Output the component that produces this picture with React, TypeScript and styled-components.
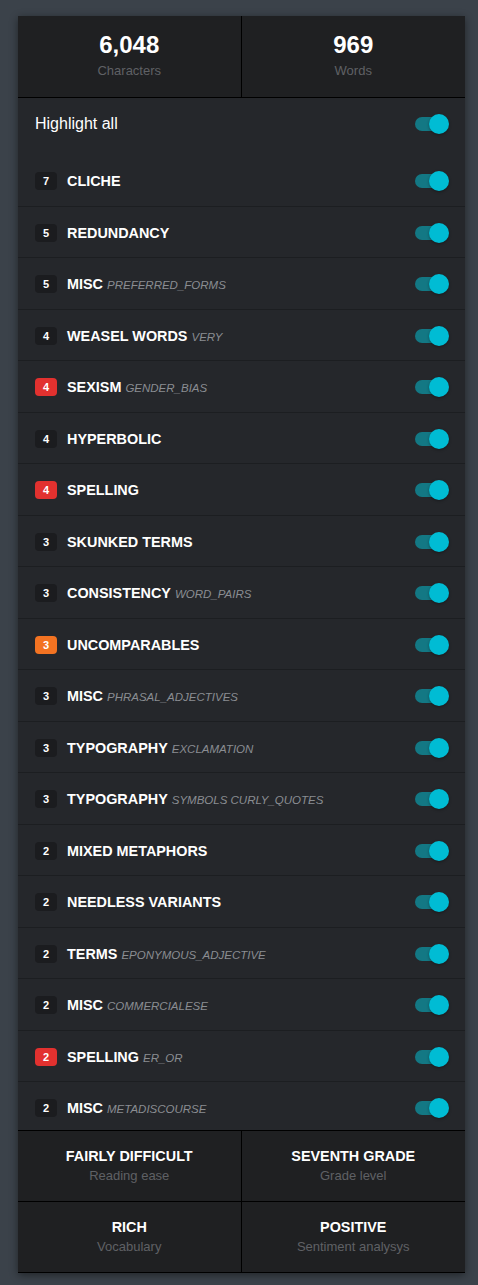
import React from "react";
import styled, { createGlobalStyle } from "styled-components";

const GlobalStyle = createGlobalStyle`
  html, body {
    margin: 0;
    padding: 0;
    background: #3b424a;
    font-family: "Liberation Sans", Arial, sans-serif;
  }
`;

type Tone = "dark" | "red" | "orange";

const toneColors: Record<Tone, string> = {
  dark: "#1b1c1f",
  red: "#e2312f",
  orange: "#f37322",
};

const Page = styled.div`
  padding: 16px 13px 12px 18px;
`;

const Panel = styled.div`
  width: 447px;
  background: #25272b;
  box-shadow: 0 2px 8px rgba(0, 0, 0, 0.45);
`;

const StatGrid = styled.div<{ $top?: boolean }>`
  display: grid;
  grid-template-columns: 1fr 1fr;
  background: #1f2022;
  border-top: ${(p) => (p.$top ? "1px solid #000" : "none")};
`;

const StatCell = styled.div<{ $divider?: boolean; $compact?: boolean }>`
  display: flex;
  flex-direction: column;
  align-items: center;
  box-sizing: border-box;
  height: ${(p) => (p.$compact ? "71px" : "82px")};
  padding-top: 15px;
  border-bottom: 1px solid #000;
  border-right: ${(p) => (p.$divider ? "1px solid #000" : "none")};
`;

const BigNumber = styled.div`
  font-size: 24px;
  font-weight: 700;
  line-height: 28px;
  color: #fff;
`;

const StatTitle = styled.div`
  font-size: 14.4px;
  font-weight: 700;
  line-height: 20px;
  color: #fff;
`;

const StatCaption = styled.div<{ $gap: number }>`
  margin-top: ${(p) => p.$gap}px;
  font-size: 13px;
  line-height: 16px;
  color: #5f6165;
`;

const ListArea = styled.div`
  height: 1032px;
  overflow: hidden;
`;

const HighlightRow = styled.div`
  display: flex;
  justify-content: space-between;
  align-items: center;
  box-sizing: border-box;
  height: 57px;
  padding: 17px 16px 22px 17px;
  font-size: 16px;
  color: #fff;
`;

const RuleRow = styled.div`
  display: flex;
  align-items: center;
  box-sizing: border-box;
  height: 51.5px;
  padding: 2px 16px 0 17px;
  border-bottom: 1px solid #1c1e21;
`;

const Badge = styled.span<{ $tone: Tone }>`
  flex: none;
  display: inline-flex;
  align-items: center;
  justify-content: center;
  width: 22px;
  height: 18px;
  border-radius: 4px;
  background: ${(p) => toneColors[p.$tone]};
  color: #fff;
  font-size: 11px;
  font-weight: 700;
`;

const Label = styled.span`
  flex: 1;
  margin-left: 10px;
  font-size: 14.4px;
  font-weight: 700;
  color: #fff;
  white-space: nowrap;
`;

const Sub = styled.span`
  margin-left: 4px;
  font-size: 11.5px;
  font-weight: 400;
  font-style: italic;
  color: #8a8d92;
`;

const SwitchBox = styled.span`
  position: relative;
  flex: none;
  width: 34px;
  height: 20px;
`;

const Track = styled.span`
  position: absolute;
  left: 0;
  top: 3px;
  width: 32px;
  height: 14px;
  border-radius: 7px;
  background: #137884;
`;

const Thumb = styled.span`
  position: absolute;
  right: 0;
  top: 0;
  width: 20px;
  height: 20px;
  border-radius: 50%;
  background: #00bcd4;
  box-shadow: 0 1px 3px rgba(0, 0, 0, 0.35);
`;

const Switch = () => (
  <SwitchBox>
    <Track />
    <Thumb />
  </SwitchBox>
);

const rules: { n: number; name: string; sub?: string; tone?: Tone }[] = [
  { n: 7, name: "CLICHE" },
  { n: 5, name: "REDUNDANCY" },
  { n: 5, name: "MISC", sub: "PREFERRED_FORMS" },
  { n: 4, name: "WEASEL WORDS", sub: "VERY" },
  { n: 4, name: "SEXISM", sub: "GENDER_BIAS", tone: "red" },
  { n: 4, name: "HYPERBOLIC" },
  { n: 4, name: "SPELLING", tone: "red" },
  { n: 3, name: "SKUNKED TERMS" },
  { n: 3, name: "CONSISTENCY", sub: "WORD_PAIRS" },
  { n: 3, name: "UNCOMPARABLES", tone: "orange" },
  { n: 3, name: "MISC", sub: "PHRASAL_ADJECTIVES" },
  { n: 3, name: "TYPOGRAPHY", sub: "EXCLAMATION" },
  { n: 3, name: "TYPOGRAPHY", sub: "SYMBOLS CURLY_QUOTES" },
  { n: 2, name: "MIXED METAPHORS" },
  { n: 2, name: "NEEDLESS VARIANTS" },
  { n: 2, name: "TERMS", sub: "EPONYMOUS_ADJECTIVE" },
  { n: 2, name: "MISC", sub: "COMMERCIALESE" },
  { n: 2, name: "SPELLING", sub: "ER_OR", tone: "red" },
  { n: 2, name: "MISC", sub: "METADISCOURSE" },
];

const footer = [
  { title: "FAIRLY DIFFICULT", caption: "Reading ease" },
  { title: "SEVENTH GRADE", caption: "Grade level" },
  { title: "RICH", caption: "Vocabulary" },
  { title: "POSITIVE", caption: "Sentiment analysys" },
];

export default function App() {
  return (
    <Page>
      <GlobalStyle />
      <Panel>
        <StatGrid>
          <StatCell $divider>
            <BigNumber>6,048</BigNumber>
            <StatCaption $gap={4}>Characters</StatCaption>
          </StatCell>
          <StatCell>
            <BigNumber>969</BigNumber>
            <StatCaption $gap={4}>Words</StatCaption>
          </StatCell>
        </StatGrid>

        <ListArea>
          <HighlightRow>
            <span>Highlight all</span>
            <Switch />
          </HighlightRow>
          {rules.map((r, i) => (
            <RuleRow key={i}>
              <Badge $tone={r.tone ?? "dark"}>{r.n}</Badge>
              <Label>
                {r.name}
                {r.sub && <Sub>{r.sub}</Sub>}
              </Label>
              <Switch />
            </RuleRow>
          ))}
        </ListArea>

        <StatGrid $top>
          {footer.map((f, i) => (
            <StatCell key={f.title} $compact $divider={i % 2 === 0}>
              <StatTitle>{f.title}</StatTitle>
              <StatCaption $gap={2}>{f.caption}</StatCaption>
            </StatCell>
          ))}
        </StatGrid>
      </Panel>
    </Page>
  );
}
